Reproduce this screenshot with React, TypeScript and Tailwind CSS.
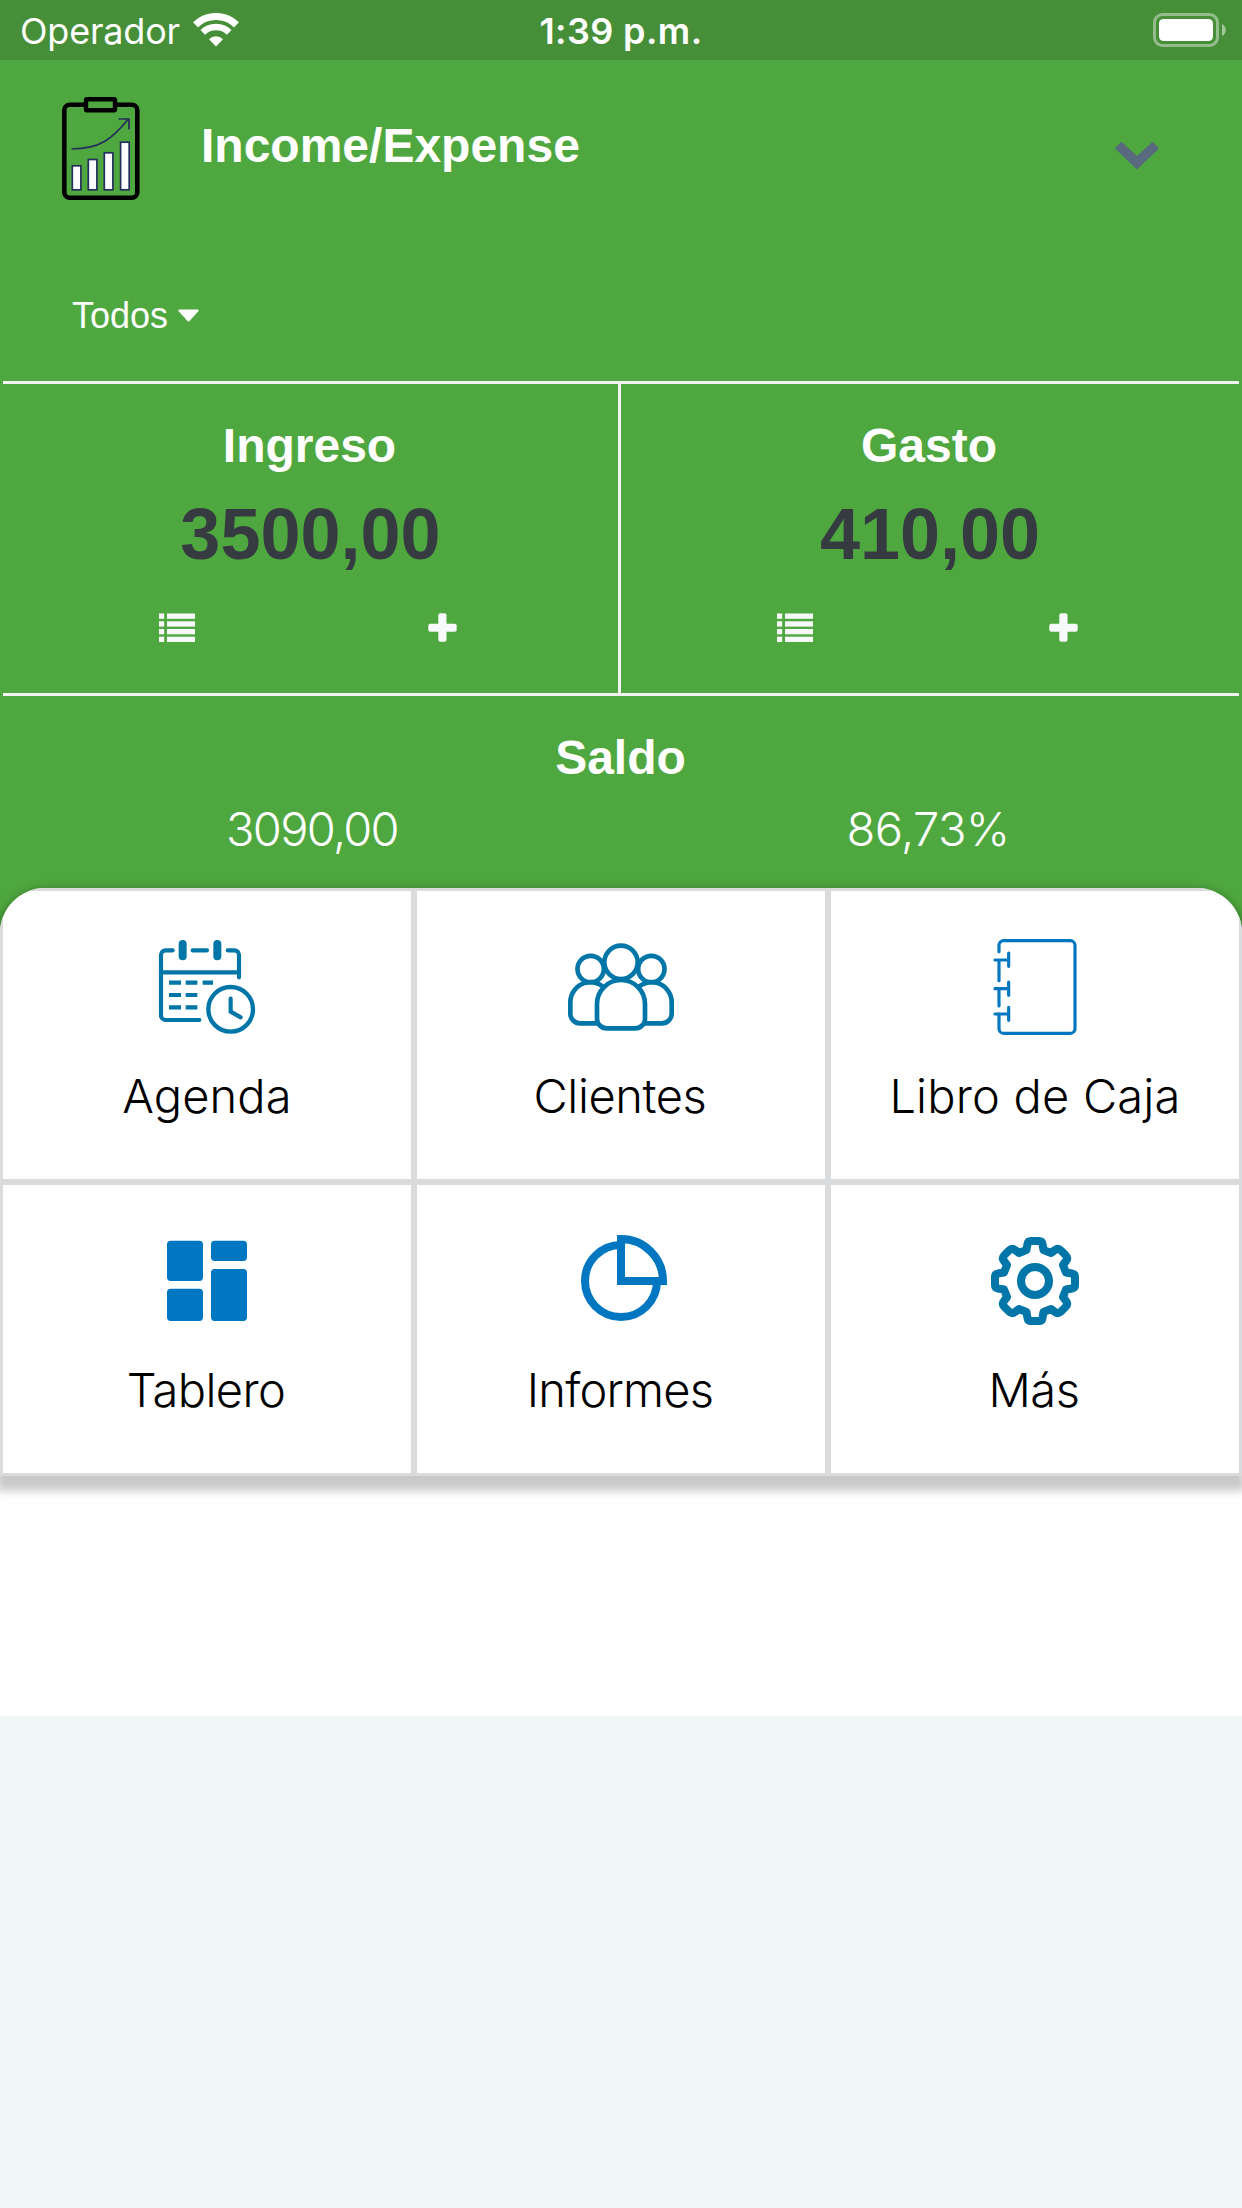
import type { ReactNode } from "react";

const TEAL = "#0076a8";
const BLUE = "#0077c0";

function WifiIcon() {
  return (
    <svg width="46" height="34" viewBox="0 0 46 34" fill="none" stroke="#fff">
      <path d="M2.5 11.8A29.5 29.5 0 0 1 43.5 11.8" strokeWidth="7.2" />
      <path d="M9.8 19.4A19 19 0 0 1 36.2 19.4" strokeWidth="6.6" />
      <path d="M23 33.5L16 26.2A10 10 0 0 1 30 26.2Z" fill="#fff" stroke="none" />
    </svg>
  );
}

function BatteryIcon() {
  return (
    <svg width="74" height="34" viewBox="0 0 74 34" fill="none">
      <rect x="1.5" y="1.5" width="63" height="31" rx="8" stroke="#fff" strokeOpacity=".42" strokeWidth="3" />
      <rect x="6" y="6" width="54" height="22" rx="4.5" fill="#fff" />
      <path d="M69 11C74 13 74 21 69 23Z" fill="#fff" fillOpacity=".5" />
    </svg>
  );
}

function ClipboardChart() {
  return (
    <svg width="78" height="104" viewBox="0 0 78 104" fill="none">
      <rect x="2.3" y="7.8" width="73" height="93" rx="5.5" stroke="#000" strokeWidth="4.6" />
      <rect x="24" y="2.3" width="29" height="11" rx="1" fill="#4fa73f" stroke="#000" strokeWidth="4.4" />
      <g stroke="#242f5c" strokeWidth="1.7">
        <path d="M9.5 52C38 52 50 42 66 22.500M56.500 22H67V32.500" />
        <g fill="#fcfcff">
          <rect x="10.300" y="68.800" width="8.600" height="24" />
          <rect x="26.300" y="62.500" width="8.600" height="30.300" />
          <rect x="42.300" y="55.800" width="8.600" height="37" />
          <rect x="58.600" y="45.200" width="8.600" height="47.600" />
        </g>
      </g>
    </svg>
  );
}

function ListIcon() {
  return (
    <svg width="36" height="29" viewBox="0 0 36 29" fill="#f8f9fa">
      {[0.5, 8.3, 16, 23.7].map((y) => (
        <g key={y}>
          <rect x="0" y={y} width="5.200" height="5.300" />
          <rect x="8" y={y} width="28" height="5.300" />
        </g>
      ))}
    </svg>
  );
}

function PlusIcon() {
  return (
    <svg width="29" height="29" viewBox="0 0 29 29" fill="#f8f9fa">
      <rect x="10.300" y="0.300" width="8.200" height="28.400" rx="2" />
      <rect x="0.300" y="10.800" width="28.400" height="8" rx="2" />
    </svg>
  );
}

function AgendaIcon() {
  return (
    <svg width="108" height="108" viewBox="99 39 324 324" fill="none" stroke={TEAL} strokeWidth="12.500" strokeLinecap="round">
      <path d="M158 91H137A14 14 0 0 0 123 105V286A14 14 0 0 0 137 300H238M218 91H261M323 91H343A14 14 0 0 1 357 105V172" />
      <path d="M123 157H357" />
      <path d="M188 72V109M292 72V109" strokeWidth="24" />
      <path
        d="M147 188H183M197 188H232M248 188H279M147 225H183M197 225H232M147 262H183M197 262H232"
        strokeLinecap="butt"
      />
      <circle cx="332" cy="268" r="67" strokeWidth="13" />
      <path d="M332 236V275L362 292" />
    </svg>
  );
}

function ClientsIcon() {
  return (
    <svg width="108" height="108" viewBox="81 39 324 324" fill="#fff" stroke={TEAL} strokeWidth="14">
      <path d="M200 310H120A29 29 0 0 1 91 281V246A60 60 0 0 1 200 212" />
      <path d="M286 310H366A29 29 0 0 0 395 281V246A60 60 0 0 0 286 212" />
      <circle cx="152" cy="147" r="39.500" />
      <circle cx="334" cy="147" r="39.500" />
      <path d="M171 252A72 72 0 0 1 315 252V296A29 29 0 0 1 286 325H200A29 29 0 0 1 171 296Z" />
      <circle cx="243" cy="127" r="50" />
    </svg>
  );
}

function CashBookIcon() {
  return (
    <svg width="108" height="108" viewBox="303 159 324 324" fill="none" stroke={BLUE} strokeWidth="9.500" strokeLinecap="round">
      <path d="M357 215V196A14 14 0 0 1 371 182H571A14 14 0 0 1 585 196V446A14 14 0 0 1 571 460H371A14 14 0 0 1 357 446V402" />
      <path d="M357 241V302M357 327V378M345 240H386M386 219V259M345 326H386M386 306V346M345 402H386M386 382V421" />
    </svg>
  );
}

function DashboardIcon() {
  return (
    <svg width="108" height="108" viewBox="459 141 324 324" fill={BLUE}>
      <rect x="501" y="182" width="108" height="121" rx="11" />
      <rect x="501" y="326" width="108" height="97" rx="11" />
      <rect x="633" y="182" width="108" height="61" rx="11" />
      <rect x="633" y="267" width="108" height="156" rx="11" />
    </svg>
  );
}

function PieIcon() {
  return (
    <svg width="108" height="108" viewBox="0 0 108 108" fill="none" stroke={BLUE} strokeWidth="8">
      <path d="M54 18A36 36 0 1 0 90 54" />
      <path d="M54 12A42 42 0 0 1 96 54H54Z" />
    </svg>
  );
}

function GearIcon() {
  return (
    <svg width="108" height="108" viewBox="-54 -54 108 108" fill="none" stroke={TEAL} strokeWidth="8" strokeLinejoin="round">
      <path d="M-4 -40H4Q7 -40 7.500 -37L8.500 -31L16 -28L20 -31Q23 -33.500 26 -30.500L30.500 -26Q33.500 -23 31 -20L28 -16L31 -8.500L37 -7.500Q40 -7 40 -4V4Q40 7 37 7.500L31 8.500L28 16L31 20Q33.500 23 30.500 26L26 30.500Q23 33.500 20 31L16 28L8.500 31L7.500 37Q7 40 4 40H-4Q-7 40 -7.500 37L-8.500 31L-16 28L-20 31Q-23 33.500 -26 30.500L-30.500 26Q-33.500 23 -31 20L-28 16L-31 8.500L-37 7.500Q-40 7 -40 4V-4Q-40 -7 -37 -7.500L-31 -8.500L-28 -16L-31 -20Q-33.500 -23 -30.500 -26L-26 -30.500Q-23 -33.500 -20 -31L-16 -28L-8.500 -31L-7.500 -37Q-7 -40 -4 -40Z" />
      <circle r="14" />
    </svg>
  );
}

function StatusBar() {
  return (
    <div className="grid h-[60px] grid-cols-3 items-start bg-[#468f38] font-['Inter',sans-serif] text-[36px] leading-[44px] text-white">
      <div className="flex pl-[20px]">
        <span className="mt-[9px] w-[173px] tracking-[-0.2px]">Operador</span>
        <span className="mt-[13px]">
          <WifiIcon />
        </span>
      </div>
      <div className="mt-[9px] text-center font-semibold tracking-[0.4px]">1:39 p.m.</div>
      <div className="mt-[13px] flex justify-end pr-[15px]">
        <BatteryIcon />
      </div>
    </div>
  );
}

function Total({ title, amount, className }: { title: string; amount: string; className: string }) {
  return (
    <section className={`flex h-[309px] flex-col pt-[34px] text-center ${className}`}>
      <h2 className="pr-[2px] text-[48px] leading-[56px] font-bold">{title}</h2>
      <p className="mt-5 text-[72px] leading-[80px] font-bold text-[#363b42]">{amount}</p>
      <div className="mt-[39px] flex justify-between pr-[161px] pl-[156px]">
        <ListIcon />
        <PlusIcon />
      </div>
    </section>
  );
}

function Tile({ label, spacing, children }: { label: string; spacing: string; children: ReactNode }) {
  return (
    <div className="flex h-[294px] flex-col items-center border-[3px] border-[#d9dbdd] bg-white pt-[42px]">
      {children}
      <span className={`mt-[27px] leading-[56px] whitespace-nowrap ${spacing}`}>{label}</span>
    </div>
  );
}

export default function App() {
  return (
    <div className="flex h-[2208px] w-[1242px] flex-col overflow-hidden bg-[#f1f7f7] font-['Liberation_Sans',Arial,sans-serif]">
      <div className="h-[1716px] bg-white">
        <div className="h-[940px] bg-[#4fa73f] text-white">
          <StatusBar />
          <header className="h-[321px] pt-[37px]">
            <div className="flex h-[104px] items-start pr-[83px] pl-[62px]">
              <ClipboardChart />
              <h1 className="mt-[21px] ml-[61px] flex-1 text-[48px] leading-[56px] font-bold">Income/Expense</h1>
              <svg className="mt-[44px]" width="44" height="29" viewBox="0 0 44 29" fill="#596a7e">
                <path d="M6.500 0.800L22 15L37.500 0.800L43.200 6.200Q44 7.200 43.200 8.200L22 28.500L0.800 8.200Q0 7.200 0.800 6.200Z" />
              </svg>
            </div>
            <div className="mt-[95px] flex items-center pl-[72px] text-[36px] leading-[40px]">
              Todos
              <svg className="-mt-px ml-[10px]" width="21" height="13" viewBox="0 0 21 13" fill="#fff">
                <path d="M1 .5H20Q21 1 20.300 2.200L11.500 12Q10.500 13 9.500 12L.7 2.200Q0 1 1 .5Z" />
              </svg>
            </div>
          </header>
          <div className="mx-[3px] grid grid-cols-[618px_618px] border-y-[3px] border-[#f2f2f2]">
            <Total title="Ingreso" amount="3500,00" className="border-r-[3px] border-[#f2f2f2]" />
            <Total title="Gasto" amount="410,00" className="" />
          </div>
          <section className="h-[192px] pt-[34px] text-center">
            <h2 className="pr-px text-[48px] leading-[56px] font-bold">Saldo</h2>
            <div className="mx-[3px] mt-[15px] grid grid-cols-2 font-['Inter',sans-serif] text-[47px] leading-[56px] font-light">
              <span className="tracking-[-1.7px]">3090,00</span>
              <span className="pr-[4px] tracking-[-0.5px]">86,73%</span>
            </div>
          </section>
          <nav className="rounded-t-[45px] font-['Inter',sans-serif] text-[47px] font-light text-black shadow-[0_12px_9px_3px_rgba(0,0,0,0.21)]">
            <div className="grid grid-cols-3 overflow-hidden rounded-t-[45px] shadow-[0_3px_12px_rgba(0,0,0,0.4)]">
              <Tile label="Agenda" spacing="tracking-[0.1px]"><AgendaIcon /></Tile>
              <Tile label="Clientes" spacing="tracking-[-0.4px] pr-[2px]"><ClientsIcon /></Tile>
              <Tile label="Libro de Caja" spacing="tracking-[0.2px]"><CashBookIcon /></Tile>
            </div>
            <div className="relative grid grid-cols-3">
              <Tile label="Tablero" spacing="tracking-[-0.6px] pr-[2px]"><DashboardIcon /></Tile>
              <Tile label="Informes" spacing="tracking-[-0.8px] pr-[2px]"><PieIcon /></Tile>
              <Tile label="Más" spacing="tracking-[-0.5px] pr-[2px]"><GearIcon /></Tile>
            </div>
          </nav>
        </div>
      </div>
    </div>
  );
}
